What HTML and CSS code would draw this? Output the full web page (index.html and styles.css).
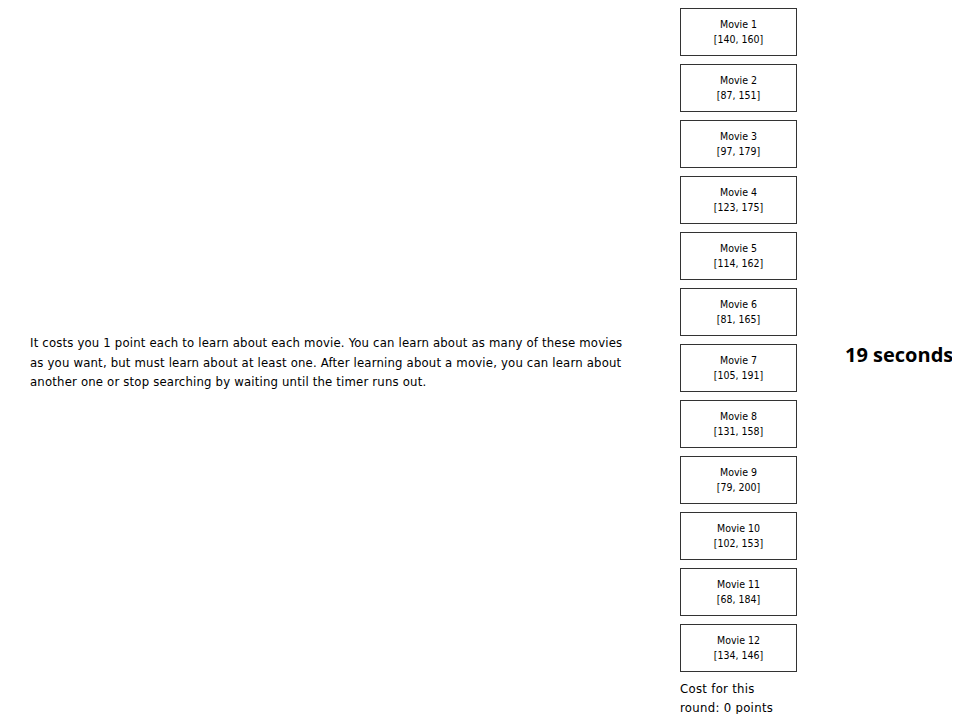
FILE: index.html
```html
<!DOCTYPE html>
<html>
<head>
<meta charset="utf-8">
<link rel="stylesheet" href="styles.css">
</head>
<body>
<div class="page">
  <div class="intro">
    <p>It costs you 1 point each to learn about each movie. You can learn about as many of these movies as you want, but must learn about at least one. After learning about a movie, you can learn about another one or stop searching by waiting until the timer runs out.</p>
  </div>
  <div class="movies">
    <div class="movie"><span>Movie 1</span><span>[140, 160]</span></div>
    <div class="movie"><span>Movie 2</span><span>[87, 151]</span></div>
    <div class="movie"><span>Movie 3</span><span>[97, 179]</span></div>
    <div class="movie"><span>Movie 4</span><span>[123, 175]</span></div>
    <div class="movie"><span>Movie 5</span><span>[114, 162]</span></div>
    <div class="movie"><span>Movie 6</span><span>[81, 165]</span></div>
    <div class="movie"><span>Movie 7</span><span>[105, 191]</span></div>
    <div class="movie"><span>Movie 8</span><span>[131, 158]</span></div>
    <div class="movie"><span>Movie 9</span><span>[79, 200]</span></div>
    <div class="movie"><span>Movie 10</span><span>[102, 153]</span></div>
    <div class="movie"><span>Movie 11</span><span>[68, 184]</span></div>
    <div class="movie"><span>Movie 12</span><span>[134, 146]</span></div>
    <div class="cost">Cost for this<br>round: 0 points</div>
  </div>
  <div class="timer">19 seconds</div>
</div>
</body>
</html>
```
FILE: styles.css
```css
body {
  margin: 8px;
  font-family: "DejaVu Sans Condensed", "DejaVu Sans", Verdana, sans-serif;
  color: #000;
  background: #fff;
}
.page {
  display: flex;
  align-items: center;
}
.intro {
  width: 600px;
  padding-left: 22px;
  flex: none;
}
.intro p {
  margin: 0;
  font-size: 13px;
  line-height: 19.5px;
  letter-spacing: 0.18px;
}
.movies {
  margin-left: 50px;
  width: 117px;
  flex: none;
  display: flex;
  flex-direction: column;
  gap: 8px;
}
.movie {
  height: 48px;
  box-sizing: border-box;
  border: 1px solid #333;
  display: flex;
  flex-direction: column;
  align-items: center;
  justify-content: center;
  font-size: 10.5px;
  line-height: 15px;
}
.cost {
  margin-top: -1px;
  font-size: 13px;
  line-height: 19px;
  letter-spacing: 0.3px;
  white-space: nowrap;
}
.timer {
  margin-left: 48px;
  font-family: "Open Sans", sans-serif;
  font-weight: bold;
  font-size: 20px;
  white-space: nowrap;
  margin-top: -16px;
}
```
